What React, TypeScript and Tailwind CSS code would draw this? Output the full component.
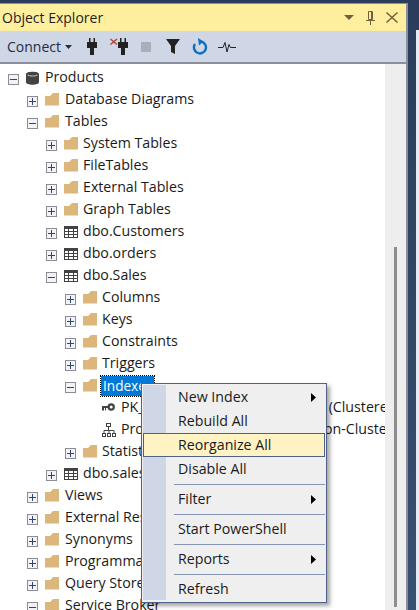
import React from "react";

const FONT = "font-['Open_Sans','Noto_Sans',sans-serif]";

function Expander({ open }: { open?: boolean }) {
  return (
    <span className="w-[11px] h-[11px] mt-[3px] border border-[#8c8c96] bg-[#f2f3f7] flex items-center justify-center relative shrink-0">
      <span className="absolute w-[7px] h-px bg-[#33456b]" />
      {!open && <span className="absolute h-[7px] w-px bg-[#33456b]" />}
    </span>
  );
}

function Folder() {
  return (
    <svg width="14" height="13" viewBox="0 0 14 13" className="shrink-0 -mt-[1px]">
      <path d="M0 3 L0 12.5 L14 12.5 L14 0 L8 0 L5 3 Z" fill="#dcb67a" />
    </svg>
  );
}

function TableIcon() {
  return (
    <svg width="14" height="12" viewBox="0 0 14 12" className="shrink-0">
      <rect x="0.5" y="0.5" width="13" height="11" fill="#fff" stroke="#424242" />
      <rect x="0" y="0" width="14" height="3" fill="#424242" />
      <path d="M0 5.5H14M0 8.5H14M4.5 3V12M9.5 3V12" stroke="#424242" strokeWidth="1" />
    </svg>
  );
}

function Db() {
  return (
    <svg width="13" height="14" viewBox="0 0 13 14">
      <path d="M0 3 C0 0 13 0 13 3 L13 11 C13 14.6 0 14.6 0 11 Z" fill="#424242" />
      <path d="M1.5 4 C3 5.4 10 5.4 11.5 4" stroke="#e8e8e8" strokeWidth="0.8" fill="none" />
    </svg>
  );
}

function KeyIcon() {
  return (
    <svg width="13" height="9" viewBox="0 0 13 9">
      <circle cx="9.2" cy="4" r="2.6" fill="none" stroke="#424242" strokeWidth="2.2" />
      <path d="M0 3H7V5H4V7.5H3V5H2V7.5H0Z" fill="#424242" />
    </svg>
  );
}

function HierIcon() {
  return (
    <svg width="14" height="14" viewBox="0 0 14 14" fill="none" stroke="#424242">
      <rect x="4.5" y="0.5" width="4" height="3" />
      <rect x="0.5" y="10.5" width="3" height="3" />
      <rect x="5.5" y="10.5" width="3" height="3" />
      <rect x="10.5" y="10.5" width="3" height="3" />
      <path d="M6.5 4V7.5M2 10V7.5H12V10M7 7.5V10" />
    </svg>
  );
}

type Row = {
  label: string;
  depth: number;
  icon: "folder" | "table" | "db" | "key" | "hier";
  exp?: "open" | "closed";
  selected?: boolean;
};

const rows: Row[] = [
  { label: "Products", depth: 0, icon: "db", exp: "open" },
  { label: "Database Diagrams", depth: 1, icon: "folder", exp: "closed" },
  { label: "Tables", depth: 1, icon: "folder", exp: "open" },
  { label: "System Tables", depth: 2, icon: "folder", exp: "closed" },
  { label: "FileTables", depth: 2, icon: "folder", exp: "closed" },
  { label: "External Tables", depth: 2, icon: "folder", exp: "closed" },
  { label: "Graph Tables", depth: 2, icon: "folder", exp: "closed" },
  { label: "dbo.Customers", depth: 2, icon: "table", exp: "closed" },
  { label: "dbo.orders", depth: 2, icon: "table", exp: "closed" },
  { label: "dbo.Sales", depth: 2, icon: "table", exp: "open" },
  { label: "Columns", depth: 3, icon: "folder", exp: "closed" },
  { label: "Keys", depth: 3, icon: "folder", exp: "closed" },
  { label: "Constraints", depth: 3, icon: "folder", exp: "closed" },
  { label: "Triggers", depth: 3, icon: "folder", exp: "closed" },
  { label: "Indexes", depth: 3, icon: "folder", exp: "open", selected: true },
  { label: "PK_Sales_B5B2A8DC5E7A1I209 (Clustered)", depth: 4, icon: "key" },
  { label: "ProductName_Index_Files_1 (Non-Clustered)", depth: 4, icon: "hier" },
  { label: "Statistics", depth: 3, icon: "folder", exp: "closed" },
  { label: "dbo.sales_backup", depth: 2, icon: "table", exp: "closed" },
  { label: "Views", depth: 1, icon: "folder", exp: "closed" },
  { label: "External Resources", depth: 1, icon: "folder", exp: "closed" },
  { label: "Synonyms", depth: 1, icon: "folder", exp: "closed" },
  { label: "Programmability", depth: 1, icon: "folder", exp: "closed" },
  { label: "Query Store", depth: 1, icon: "folder", exp: "closed" },
  { label: "Service Broker", depth: 1, icon: "folder", exp: "open" },
];

const DEPTH_PAD = ["pl-[8px]", "pl-[27px]", "pl-[46px]", "pl-[65px]", "pl-[84px]"];

function TreeRow({ r }: { r: Row }) {
  return (
    <div className={`h-[22px] flex items-center ${DEPTH_PAD[r.depth]} whitespace-nowrap`}>
      <span className="w-[11px] shrink-0 flex">
        {r.exp && <Expander open={r.exp === "open"} />}
      </span>
      <span
        className={`${r.depth === 1 ? "w-[24px]" : "w-[23px]"} ml-[3px] flex justify-start pl-[4px] shrink-0`}
      >
        {r.icon === "folder" && <Folder />}
        {r.icon === "table" && <TableIcon />}
        {r.icon === "db" && <Db />}
        {r.icon === "key" && <KeyIcon />}
        {r.icon === "hier" && <HierIcon />}
      </span>
      <span
        className={
          r.selected
            ? "bg-[#0078d7] text-white text-[13.6px] px-[2px] h-[20px] flex items-center outline-1 outline-dotted outline-black -ml-[1px]"
            : "text-[#1a1a1a]"
        }
      >
        {r.label}
      </span>
    </div>
  );
}

function Arrow() {
  return (
    <svg width="5" height="9" viewBox="0 0 5 9" className="absolute right-[10px] top-[8px]">
      <path d="M0 0L5 4.5L0 9Z" fill="#000" />
    </svg>
  );
}

function Item({ label, arrow, hot }: { label: string; arrow?: boolean; hot?: boolean }) {
  return (
    <div
      className={`relative h-[24px] flex items-center ${
        hot ? "bg-[#fff3c4] border border-[#4f6187] -ml-[23px] mr-[1px] pl-[34px]" : "pl-[12px]"
      }`}
    >
      {label}
      {arrow && <Arrow />}
    </div>
  );
}

function Sep() {
  return <div className="h-px bg-[#8595b3] mt-[3px] mb-[2px] ml-[8px] mr-[1px]" />;
}

export default function App() {
  return (
    <div className={`${FONT} w-[419px] h-[610px] overflow-hidden bg-[#2b3c5c] flex text-[14px] leading-none`}>
      <div className="w-[408px] mt-[3px] h-[607px] bg-white border-t border-r-[2px] border-[#8a8f9c] relative flex flex-col overflow-hidden shrink-0">
        {/* title */}
        <div className="h-[27px] bg-[#fdef9e] flex items-center shrink-0 pl-[2px] pr-[8px] text-[14px] text-[#1f1f1f]">
          <span className="flex-1">Object Explorer</span>
          <svg width="10" height="5" viewBox="0 0 10 5" className="mr-[12px]">
            <path d="M0 0H10L5 5Z" fill="#70603c" />
          </svg>
          <svg width="9" height="14" viewBox="0 0 9 14" className="mr-[11px]" fill="none" stroke="#70603c">
            <path d="M2.5 0.5H6.5V8.5H2.5Z M5.5 1V8" />
            <path d="M0 9.5H9M4.5 9.5V14" />
          </svg>
          <svg width="12" height="11" viewBox="0 0 12 11" stroke="#70603c" strokeWidth="1.4" fill="none">
            <path d="M0.5 0.5L11.5 10.5M11.5 0.5L0.5 10.5" />
          </svg>
        </div>
        {/* toolbar */}
        <div className="h-[33px] bg-[#cfd6e5] border-b-[2px] border-[#8a8f9c] flex items-center shrink-0 pl-[7px] text-[#1f2d4a]">
          <span>Connect</span>
          <svg width="7" height="4" viewBox="0 0 7 4" className="ml-[4px]">
            <path d="M0 0H7L3.5 4Z" fill="#1f2d4a" />
          </svg>
          <svg width="10" height="17" viewBox="0 0 10 17" className="ml-[15px]" fill="#222">
            <path d="M2 0H3.5V4H6.5V0H8V4H10V10H7V17H3V10H0V4H2Z" />
          </svg>
          <svg width="18" height="17" viewBox="0 0 18 17" className="ml-[13px]">
            <path d="M0.5 1L7 6.5M7 1L0.5 6.5" stroke="#b03a2e" strokeWidth="1.2" />
            <path d="M10 0H11.5V4H14.5V0H16V4H18V10H15V17H11V10H8V4H10Z" fill="#222" />
          </svg>
          <span className="w-[10px] h-[10px] bg-[#a9aeb8] ml-[13px]" />
          <svg width="14" height="15" viewBox="0 0 14 15" className="ml-[15px]" fill="#222">
            <path d="M0 0H14L9 7V15L5 13V7Z" />
          </svg>
          <svg width="16" height="17" viewBox="0 0 16 17" className="ml-[12px]" fill="none">
            <path d="M9 3.5A6 6 0 1 1 3 6" stroke="#0e70c0" strokeWidth="2.4" />
            <path d="M6 0L11.5 3.5L7 7.5Z" fill="#0e70c0" />
          </svg>
          <svg width="18" height="12" viewBox="0 0 18 12" className="ml-[10px]" fill="none" stroke="#222">
            <path d="M0 6.5H5L7 1.5L9 11L11 3.5L12.5 6.5H18" />
          </svg>
        </div>
        {/* tree */}
        <div className="flex-1 flex min-h-0 overflow-hidden">
          <div className="w-[385px] pt-[2.5px] text-[14.2px] overflow-hidden">
            {rows.map((r) => (
              <TreeRow key={r.label} r={r} />
            ))}
          </div>
          <div className="flex-1 bg-[#eeeeee] flex flex-col items-center pt-[183px]">
            <div className="w-[3px] h-[360px] bg-[#8e8e8e]" />
          </div>
        </div>

        {/* context menu */}
        <div className="absolute left-[141px] top-[379px] w-[186px] h-[220px] bg-[#efefef] border border-[#4f6187] shadow-[3px_3px_4px_rgba(0,0,0,0.35)] text-[14.2px] text-[#1a1a1a] flex">
          <div className="w-[23px] ml-[1px] mt-[1px] mb-[2px] bg-[#cfd6e5] shrink-0" />
          <div className="flex-1 pt-[1px] flex flex-col">
            <Item label="New Index" arrow />
            <Item label="Rebuild All" />
            <Item label="Reorganize All" hot />
            <Item label="Disable All" />
            <Sep />
            <Item label="Filter" arrow />
            <Sep />
            <Item label="Start PowerShell" />
            <Sep />
            <Item label="Reports" arrow />
            <Sep />
            <Item label="Refresh" />
          </div>
        </div>
      </div>
      {/* neighbouring window edge */}
      <div className="w-[8px] h-full shrink-0 bg-gradient-to-b from-[#2b3c5c] to-[#3a5070]" />
      <div className="w-[3px] h-[580px] mt-[30px] shrink-0 bg-[#e6eaf3]" />
    </div>
  );
}
